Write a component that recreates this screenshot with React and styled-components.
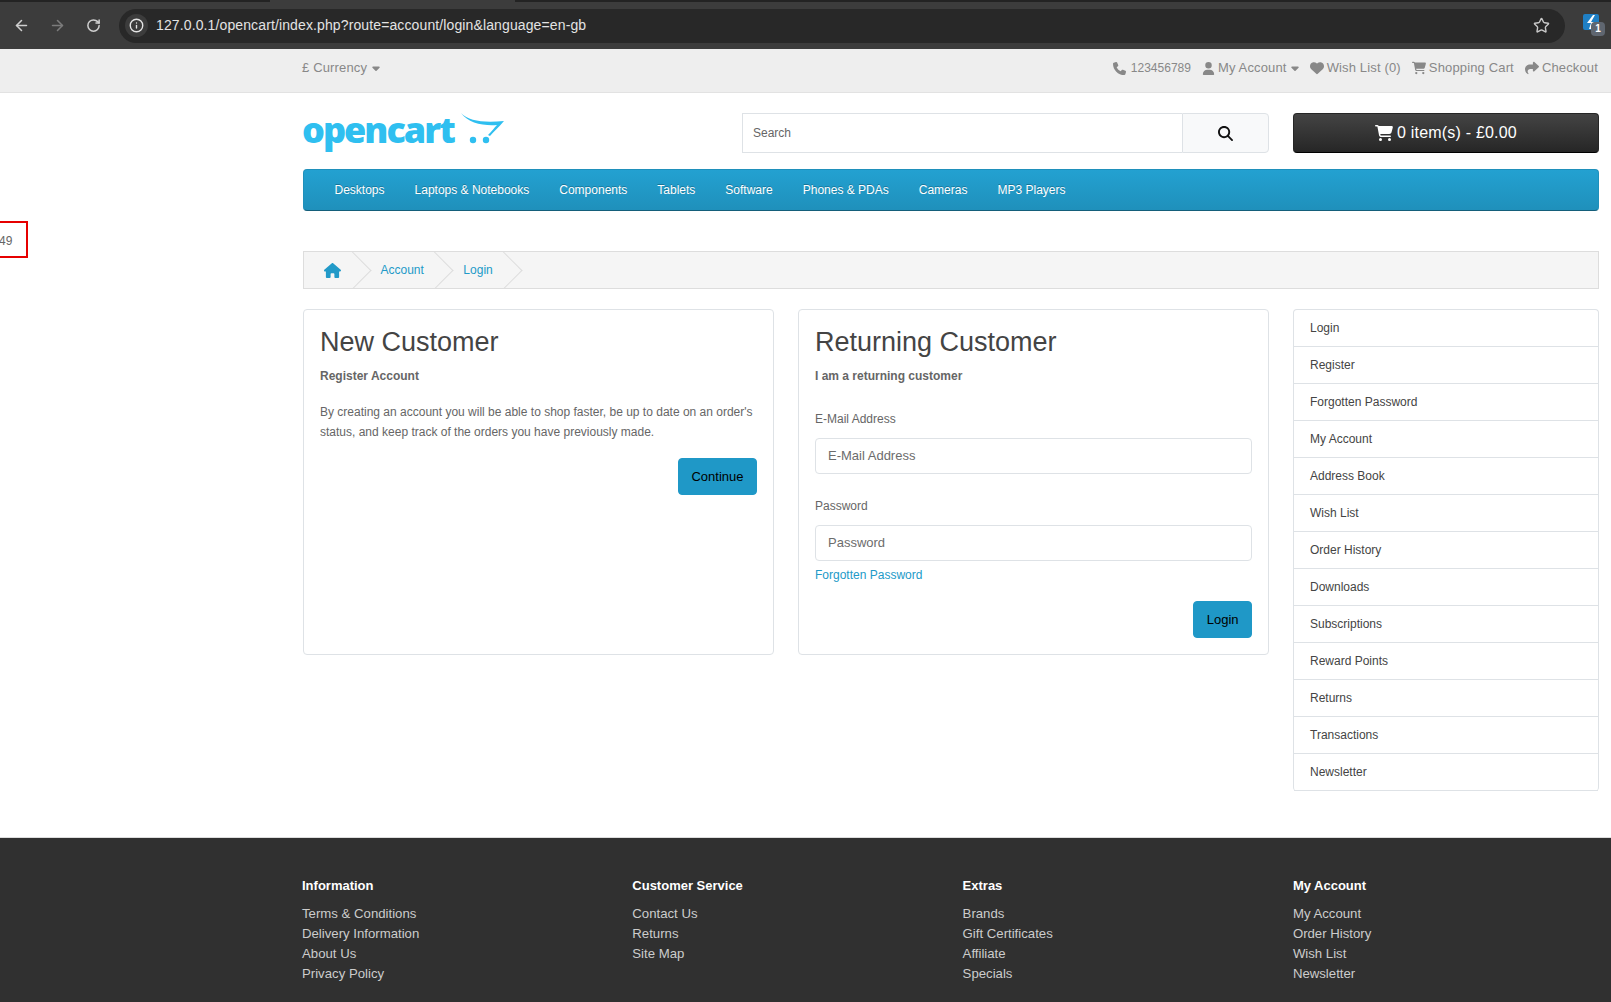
import React from 'react';
import styled, { createGlobalStyle } from 'styled-components';
import { ArrowLeft, ArrowRight, RotateCw, Info, Star } from 'lucide-react';
import {
  FaPhone, FaUser, FaHeart, FaCartShopping, FaShare, FaHouse,
  FaMagnifyingGlass, FaCaretDown,
} from 'react-icons/fa6';

const GlobalStyle = createGlobalStyle`
  html, body { margin: 0; padding: 0; background: #fff; overflow-x: hidden; }
  body {
    font-family: "Liberation Sans", Arial, sans-serif;
    font-size: 12px;
    line-height: 20px;
    color: #666;
  }
  * { box-sizing: border-box; }
`;

const sideLinks = [
  'Login', 'Register', 'Forgotten Password', 'My Account', 'Address Book', 'Wish List',
  'Order History', 'Downloads', 'Subscriptions', 'Reward Points', 'Returns', 'Transactions', 'Newsletter',
];

const navLinks = ['Desktops', 'Laptops & Notebooks', 'Components', 'Tablets', 'Software', 'Phones & PDAs', 'Cameras', 'MP3 Players'];

const footerCols = [
  { title: 'Information', links: ['Terms & Conditions', 'Delivery Information', 'About Us', 'Privacy Policy'] },
  { title: 'Customer Service', links: ['Contact Us', 'Returns', 'Site Map'] },
  { title: 'Extras', links: ['Brands', 'Gift Certificates', 'Affiliate', 'Specials'] },
  { title: 'My Account', links: ['My Account', 'Order History', 'Wish List', 'Newsletter'] },
];

const App = () => {
  return (
    <>
      <GlobalStyle />
      <Chrome>
        <TabStrip>
          <ActiveTab />
        </TabStrip>
        <Toolbar>
          <ToolIcon><ArrowLeft size={17} strokeWidth={2.2} /></ToolIcon>
          <ToolIcon $dim><ArrowRight size={17} strokeWidth={2.2} /></ToolIcon>
          <ToolIcon><RotateCw size={15} strokeWidth={2.4} /></ToolIcon>
          <UrlPill>
            <SiteInfo><Info size={15} strokeWidth={2.2} /></SiteInfo>
            <UrlText>127.0.0.1/opencart/index.php?route=account/login&amp;language=en-gb</UrlText>
            <Star size={17} strokeWidth={2} color="#c8c8c8" />
          </UrlPill>
          <Extension>
            <ExtensionSquare>
              <svg width="16" height="16" viewBox="0 0 16 16">
                <path d="M10 1 L4 9 H8 L6 15 L8 15 L11 8 H8 L12 1 Z" fill="#fff" />
              </svg>
            </ExtensionSquare>
            <ExtensionBadge>1</ExtensionBadge>
          </Extension>
        </Toolbar>
      </Chrome>

      <RedBox>49</RedBox>

      <TopBar>
        <Container>
          <TopRow>
            <TopLink>£ Currency <FaCaretDown size={12} /></TopLink>
            <TopLinks>
              <TopLink><FaPhone size={13} /> <Digits>123456789</Digits></TopLink>
              <TopLink><FaUser size={13} /> My Account <Caret><FaCaretDown size={12} /></Caret></TopLink>
              <TopLink><FaHeart size={14} /> Wish List (0)</TopLink>
              <TopLink><FaCartShopping size={14} /> Shopping Cart</TopLink>
              <TopLink><FaShare size={14} /> Checkout</TopLink>
            </TopLinks>
          </TopRow>
        </Container>
      </TopBar>

      <Container>
        <Header>
          <Logo>
            <LogoWord>opencart</LogoWord>
            <svg width="46" height="36" viewBox="0 0 46 36">
              <path d="M2 0 C10 8 24 10 45 8 C40 14 35 18 31 23 L29 22 C33 18 35 15 38 12 C24 13 9 10 2 0 Z" fill="#2fbff0" />
              <circle cx="14" cy="27" r="3.2" fill="#2fbff0" />
              <circle cx="27" cy="27" r="3.2" fill="#2fbff0" />
            </svg>
          </Logo>
          <SearchGroup>
            <SearchInput placeholder="Search" />
            <SearchButton><FaMagnifyingGlass size={15} color="#111" /></SearchButton>
          </SearchGroup>
          <CartButton><FaCartShopping size={18} /> 0 item(s) - £0.00</CartButton>
        </Header>

        <Nav>
          {navLinks.map((link) => <NavLink key={link}>{link}</NavLink>)}
        </Nav>

        <Breadcrumb>
          <Crumb $first><FaHouse size={17} /></Crumb>
          <Crumb>Account</Crumb>
          <Crumb>Login</Crumb>
        </Breadcrumb>

        <Main>
          <Card>
            <CardTitle>New Customer</CardTitle>
            <Lead>Register Account</Lead>
            <Text>By creating an account you will be able to shop faster, be up to date on an order's status, and keep track of the orders you have previously made.</Text>
            <ButtonRow><Button>Continue</Button></ButtonRow>
          </Card>
          <Card>
            <CardTitle>Returning Customer</CardTitle>
            <Lead>I am a returning customer</Lead>
            <FieldLabel $top="23px">E-Mail Address</FieldLabel>
            <Input placeholder="E-Mail Address" />
            <FieldLabel $top="22px">Password</FieldLabel>
            <Input placeholder="Password" type="password" />
            <Forgot>Forgotten Password</Forgot>
            <ButtonRow $top="16px"><Button>Login</Button></ButtonRow>
          </Card>
          <SideList>
            {sideLinks.map((link) => <SideItem key={link}>{link}</SideItem>)}
          </SideList>
        </Main>
      </Container>

      <Footer>
        <Container>
          <FooterGrid>
            {footerCols.map((col) => (
              <div key={col.title}>
                <FooterTitle>{col.title}</FooterTitle>
                {col.links.map((link) => <FooterLink key={link}>{link}</FooterLink>)}
              </div>
            ))}
          </FooterGrid>
        </Container>
      </Footer>
    </>
  );
};

const Chrome = styled.div`
  height: 49px;
  background: #3c3c3c;
`;

const TabStrip = styled.div`
  height: 2px;
  background: #232323;
  padding-left: 270px;
`;

const ActiveTab = styled.div`
  width: 245px;
  height: 2px;
  background: #3c3c3c;
`;

const Toolbar = styled.div`
  height: 47px;
  display: flex;
  align-items: center;
  padding: 0 6px 0 3px;
`;

const ToolIcon = styled.div`
  width: 36px;
  display: flex;
  justify-content: center;
  color: ${(p) => (p.$dim ? '#7c7c7c' : '#cfcfcf')};
`;

const UrlPill = styled.div`
  flex: 1;
  height: 34px;
  margin-left: 8px;
  background: #282828;
  border-radius: 17px;
  display: flex;
  align-items: center;
  padding: 0 15px 0 6px;
`;

const SiteInfo = styled.div`
  width: 23px;
  height: 23px;
  border-radius: 50%;
  background: #3c3c3c;
  color: #e4e4e4;
  display: flex;
  align-items: center;
  justify-content: center;
`;

const UrlText = styled.div`
  flex: 1;
  margin-left: 8px;
  padding-bottom: 1px;
  font-size: 14px;
  letter-spacing: 0.12px;
  color: #e3e3e3;
`;

const Extension = styled.div`
  position: relative;
  width: 22px;
  height: 24px;
  margin-left: 18px;
`;

const ExtensionSquare = styled.div`
  width: 16px;
  height: 16px;
  background: #1f7fc4;
  border-radius: 2px;
  overflow: hidden;
  & > svg { display: block; }
`;

const ExtensionBadge = styled.div`
  position: absolute;
  left: 8px;
  top: 8px;
  width: 14px;
  height: 14px;
  border-radius: 4px;
  background: #5f6670;
  color: #fff;
  font-size: 10px;
  font-weight: 700;
  line-height: 14px;
  text-align: center;
`;

const RedBox = styled.div`
  position: absolute;
  left: -2px;
  top: 221px;
  width: 30px;
  height: 37px;
  border: 2px solid #e60000;
  padding-top: 8px;
  text-indent: -1px;
  font-size: 12px;
  color: #666;
`;

const Container = styled.div`
  width: 1320px;
  margin-left: 290px;
  padding: 0 12px;
`;

const TopBar = styled.div`
  height: 44px;
  background: #eee;
  border-bottom: 1px solid #e2e2e2;
`;

const TopRow = styled.div`
  height: 38px;
  display: flex;
  align-items: center;
  justify-content: space-between;
`;

const TopLinks = styled.div`
  display: flex;
  gap: 11px;
`;

const TopLink = styled.span`
  font-size: 13px;
  letter-spacing: 0.15px;
  color: #888;
  display: inline-flex;
  align-items: center;
  gap: 3px;
`;

const Caret = styled.span`
  display: inline-flex;
  margin: 0 -2px 0 -1px;
`;

const Digits = styled.span`
  font-size: 12px;
  letter-spacing: 0;
  margin-left: 2px;
`;

const Header = styled.div`
  display: grid;
  grid-template-columns: 440px 527px 330px;
  padding-top: 20px;
  & > :nth-child(3) { margin-left: 24px; }
`;

const Logo = styled.div`
  height: 40px;
  display: flex;
  align-items: flex-start;
`;

const LogoWord = styled.span`
  font-family: "Open Sans", sans-serif;
  font-size: 36px;
  font-weight: 800;
  line-height: 34px;
  letter-spacing: -2px;
  color: #2fbff0;
  margin-right: 5px;
`;

const SearchGroup = styled.div`
  display: flex;
  height: 40px;
`;

const SearchInput = styled.input`
  flex: 1;
  min-width: 0;
  border: 1px solid #dee2e6;
  border-right: 0;
  padding: 0 10px;
  font: 12px "Liberation Sans", sans-serif;
  outline: none;
  &::placeholder { color: #666; opacity: 1; }
`;

const SearchButton = styled.button`
  width: 87px;
  border: 1px solid #dee2e6;
  border-radius: 0 4px 4px 0;
  background: #f8f9fa;
  display: flex;
  align-items: center;
  justify-content: center;
`;

const CartButton = styled.button`
  height: 40px;
  border: 1px solid #262626;
  border-bottom-color: #000;
  border-radius: 4px;
  background: linear-gradient(to bottom, #444, #262626);
  color: #fff;
  font: 16px "Liberation Sans", sans-serif;
  letter-spacing: 0.2px;
  display: flex;
  align-items: center;
  justify-content: center;
  gap: 4px;
`;

const Nav = styled.nav`
  height: 42px;
  margin: 16px -1px 0 1px;
  padding-left: 15.5px;
  display: flex;
  align-items: center;
  border: 1px solid #1f90bb;
  border-bottom-color: #145e7a;
  border-radius: 4px;
  background: linear-gradient(to bottom, #23a1d1, #1f90bb);
`;

const NavLink = styled.a`
  padding: 0 15px;
  font-size: 12px;
  color: #fff;
  text-shadow: 0 -1px 0 rgba(0, 0, 0, 0.25);
`;

const Breadcrumb = styled.ul`
  height: 38px;
  margin: 40px -1px 20px 1px;
  padding: 0;
  list-style: none;
  display: flex;
  overflow: hidden;
  border: 1px solid #ddd;
  background: #f5f5f5;
`;

const Crumb = styled.li`
  position: relative;
  display: flex;
  align-items: center;
  padding: 0 29.5px 0 ${(p) => (p.$first ? '20px' : '10px')};
  color: #229ac8;
  &::after {
    content: '';
    position: absolute;
    top: 5px;
    right: 5px;
    width: 26px;
    height: 26px;
    border-top: 1px solid #ddd;
    border-right: 1px solid #ddd;
    transform: rotate(45deg);
  }
`;

const Main = styled.div`
  display: grid;
  grid-template-columns: 471px 471px 306px;
  column-gap: 24px;
  align-items: start;
  margin-left: 1px;
`;

const Card = styled.div`
  height: 346px;
  border: 1px solid #dee2e6;
  border-radius: 4px;
  padding: 16px 16px 0;
`;

const CardTitle = styled.h2`
  margin: 0 0 8px;
  font-size: 27px;
  font-weight: 400;
  line-height: 32px;
  color: #444;
`;

const Lead = styled.p`
  margin: 0;
  font-weight: 700;
`;

const Text = styled.p`
  margin: 16px 0 16px;
`;

const ButtonRow = styled.div`
  display: flex;
  justify-content: flex-end;
  margin-top: ${(p) => p.$top || '0'};
`;

const Button = styled.button`
  height: 37px;
  padding: 0 12.5px;
  border: 1px solid #1f98c7;
  border-radius: 4px;
  background: #1f98c7;
  color: #000;
  font: 13px "Liberation Sans", sans-serif;
`;

const FieldLabel = styled.label`
  display: block;
  margin: ${(p) => p.$top} 0 9px;
`;

const Input = styled.input`
  display: block;
  width: 100%;
  height: 36px;
  padding: 0 12px 2px;
  border: 1px solid #dee2e6;
  border-radius: 4px;
  font: 13px "Liberation Sans", sans-serif;
  outline: none;
  &::placeholder { color: #6c6c6c; opacity: 1; }
`;

const Forgot = styled.a`
  display: block;
  margin-top: 4px;
  color: #229ac8;
`;

const SideList = styled.div`
  border: 1px solid #dee2e6;
  border-bottom: 0;
  border-radius: 4px;
`;

const SideItem = styled.a`
  display: flex;
  align-items: center;
  height: 37px;
  padding-left: 16px;
  border-bottom: 1px solid #dee2e6;
  color: #444;
`;

const Footer = styled.footer`
  margin-top: 46px;
  height: 166px;
  border-top: 1px solid #ddd;
  background: #303030;
  padding-top: 38px;
`;

const FooterGrid = styled.div`
  display: grid;
  grid-template-columns: repeat(4, 330.3px);
  margin-right: -30px;
`;

const FooterTitle = styled.h5`
  margin: 0 0 8px;
  font-size: 13px;
  font-weight: 700;
  line-height: 20px;
  color: #fff;
`;

const FooterLink = styled.a`
  display: block;
  font-size: 13.2px;
  line-height: 20px;
  color: #ccc;
`;

export default App;
